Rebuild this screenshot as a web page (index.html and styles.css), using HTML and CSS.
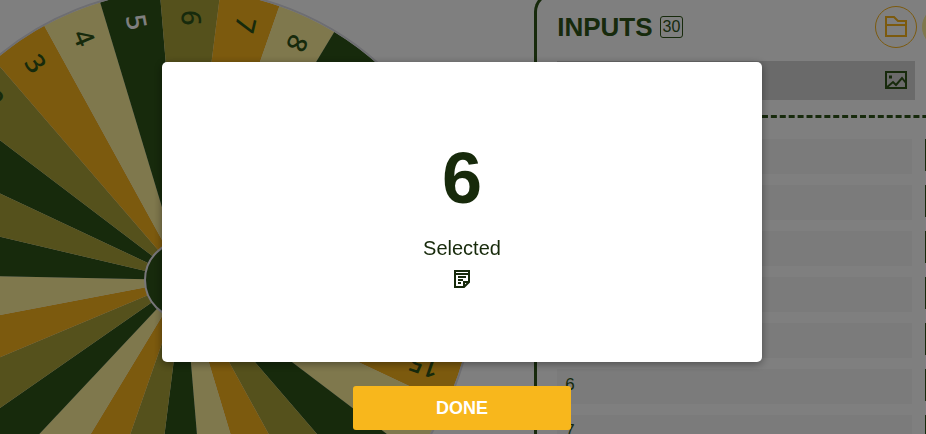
FILE: index.html
```
<!DOCTYPE html>
<html lang="en">
    <head>
        <meta charset="utf-8">
        <title>Picker Wheel</title>
        <meta name="viewport" content="width=device-width, initial-scale=1.0">
        <link rel="stylesheet" href="styles.css">
    </head>
    <body>
        <main class="page">
            <section class="stage">
                <svg class="wheel" id="wheel" viewBox="-293 -293 586 586"></svg>
            </section>
            <section class="panel">
                <header class="panelHeader">
                    <h2>INPUTS</h2>
                    <span class="count">30</span>
                    <div class="tools">
                        <button class="round" aria-label="Open list">
                            <svg width="24" height="24" viewBox="0 0 24 24">
                                <path d="M2 2h8l4 4h8v15H2zM2 10h20"/>
                            </svg>
                        </button>
                        <button class="round add" aria-label="Add list"></button>
                    </div>
                </header>
                <div class="entry">
                    <input type="text" aria-label="Input text">
                    <button class="picture" aria-label="Add image">
                        <svg width="24" height="20" viewBox="0 0 24 20">
                            <path d="M2 1h20v16H2zM2 17l7-6 3 3 6-7 4 5"/>
                            <path d="M5 6h3" stroke-width="3"/>
                        </svg>
                    </button>
                </div>
                <ul class="list" id="list"></ul>
            </section>
        </main>
        <div class="overlay">
            <div class="result" role="dialog" aria-label="Result">
                <h1>6</h1>
                <p>Selected</p>
                <svg class="note" width="16" height="18" viewBox="0 0 16 18">
                    <path d="M1 1h14v11l-5 5H1zM1 4h14M10 17v-5h5M4 7h8M4 10h5M4 13h3"/>
                </svg>
            </div>
            <button class="done">DONE</button>
        </div>
        <script>
        var SLICES = 30;
        var STEP = 360 / SLICES;
        var RADIUS = 290;
        var COLORS = ['#fff09a', '#2e5418', '#aaa238', '#f8b41c'];
        var NS = 'http://www.w3.org/2000/svg';

        function add(name, attrs) {
            var el = document.createElementNS(NS, name);
            for (var key in attrs) {
                el.setAttribute(key, attrs[key]);
            }
            document.getElementById('wheel').appendChild(el);
            return el;
        }

        function point(deg) {
            var rad = deg * Math.PI / 180;
            return (RADIUS * Math.sin(rad)) + ' ' + (-RADIUS * Math.cos(rad));
        }

        for (var i = 1; i <= SLICES; i++) {
            // slice 6 stops just right of the top
            var mid = (i - 6) * STEP + 1.2;
            add('path', {
                d: 'M0 0L' + point(mid - STEP / 2) + 'A290 290 0 0 1 ' + point(mid + STEP / 2) + 'z',
                fill: COLORS[i % 4]
            });
            add('text', {
                x: -270,
                y: 8,
                'class': i % 4 == 1 ? 'label light' : 'label',
                transform: 'rotate(' + (mid + 90) + ')'
            }).textContent = i;
        }
        add('circle', {r: 291, 'class': 'rim'});
        add('circle', {r: 39, 'class': 'hub'});

        for (var n = 1; n <= 7; n++) {
            var row = document.createElement('li');
            row.innerHTML = '<input type="text" aria-label="Input ' + n + '" value="' + n + '">' +
                '<button aria-label="Options for input ' + n + '"></button>';
            document.getElementById('list').appendChild(row);
        }
        </script>
    </body>
</html>
```
FILE: styles.css
```
* {
    margin: 0;
    box-sizing: border-box;
}

body {
    background: white;
    color: #2e5418;
    font-family: "Liberation Sans", Arial, sans-serif;
    overflow: hidden;
}

button,
input {
    font: inherit;
    color: inherit;
    border: none;
    outline: 0;
    padding: 0;
}

button {
    cursor: pointer;
}

svg {
    display: block;
    fill: none;
    stroke: currentColor;
    stroke-width: 2px;
}

.page {
    display: grid;
    grid-template-columns: 15fr 11fr;
    height: 100vh;
    overflow: hidden;
}

.stage {
    display: flex;
    justify-content: flex-end;
    align-items: flex-start;
    min-width: 0;
}

.wheel {
    flex: none;
    width: 586px;
    height: 586px;
    margin: -13px 57px 0 0;
    stroke: none;
}

.label {
    font-family: "Noto Sans", sans-serif;
    font-size: 27px;
    font-weight: 500;
    fill: #2e5418;
}

.light {
    fill: white;
}

.rim {
    fill: none;
    stroke: #dcdce4;
}

.hub {
    fill: #2e5418;
    stroke: #f0ecf4;
}

.panel {
    margin: -8px -48px 0 0;
    padding: 14px 10px 0 20px;
    border: 3px solid #2e5418;
    border-right: none;
    border-radius: 20px 0 0 0;
}

.panelHeader {
    display: flex;
    align-items: center;
    height: 36px;
}

.panelHeader > h2 {
    font-size: 26px;
    line-height: 30px;
}

.count {
    margin-left: 7px;
    padding: 0 2px;
    border: 1px solid #2e5418;
    border-radius: 3px;
    font-size: 16px;
    line-height: 20px;
}

.tools {
    display: flex;
    gap: 5px;
    margin-left: auto;
}

.round {
    display: grid;
    place-items: center;
    width: 42px;
    height: 42px;
    border: 1px solid #f8b41c;
    border-radius: 50%;
    background: white;
    color: #f8b41c;
}

.add {
    border-color: #fff09a;
    background: #fff09a;
}

.entry {
    display: flex;
    align-items: center;
    height: 39px;
    margin: 16px 49px 15px 0;
    padding: 0 7px;
    background: #d4d4d4;
}

.entry > input {
    flex: 1;
    min-width: 0;
    background: none;
}

.picture {
    background: none;
}

.list {
    display: grid;
    gap: 11px;
    padding: 21px 0 0;
    border-top: 3px dashed #2e5418;
    list-style: none;
}

.list > li {
    display: grid;
    grid-template-columns: 1fr 39px;
    gap: 13px;
    height: 35px;
}

.list input {
    min-width: 0;
    padding: 0 8px 4px;
    background: #f6f6f6;
    font-size: 17px;
}

.list button {
    height: 32px;
    background: #2e5418;
}

.overlay {
    position: fixed;
    inset: 0;
    display: flex;
    flex-direction: column;
    align-items: center;
    gap: 24px;
    padding: 62px 18px 0 16px;
    background: rgba(0, 0, 0, 0.5);
}

.result {
    display: flex;
    flex-direction: column;
    align-items: center;
    width: 100%;
    max-width: 600px;
    height: 300px;
    padding-top: 76px;
    border-radius: 5px;
    background: white;
    color: #172a0b;
    box-shadow: 0 2px 8px rgba(0, 0, 0, 0.4);
}

.result > h1 {
    font-size: 72px;
    line-height: 80px;
}

.result > p {
    margin: 18px 0 10px;
    font-size: 20px;
    line-height: 24px;
}

.done {
    width: 218px;
    height: 44px;
    border-radius: 3px;
    background: #f8b71c;
    color: white;
    font-size: 18px;
    font-weight: 700;
}
```
